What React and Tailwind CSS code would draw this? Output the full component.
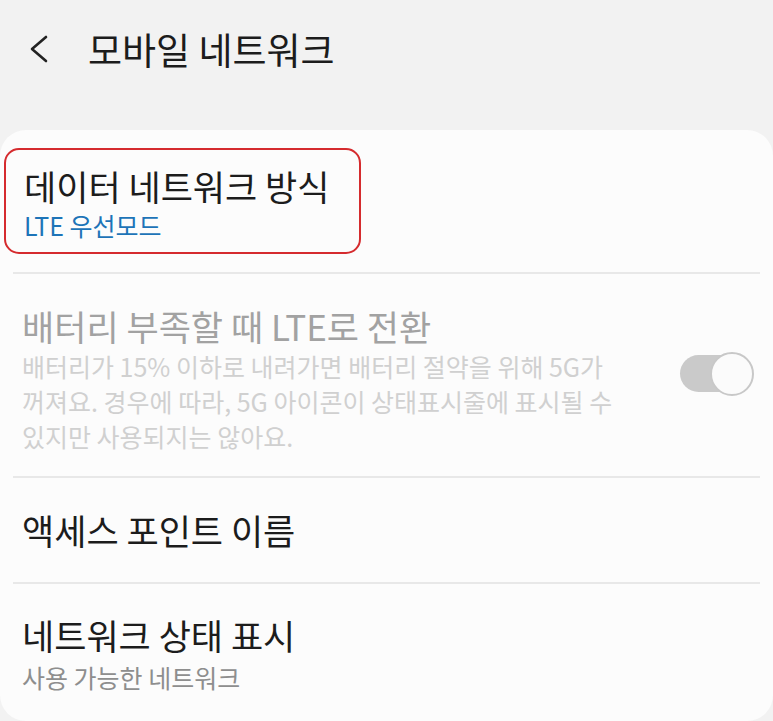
import React from 'react';

const font = { fontFamily: '"Noto Sans CJK KR", "Noto Sans", sans-serif' };

const Divider = () => <div className="mx-[13px] h-[2px] bg-[#e8e8e8]" />;

const Toggle = () => (
    <div className="relative w-[74px] h-[44px] shrink-0">
        <div className="absolute left-0 top-[3px] w-[66px] h-[37px] rounded-full bg-[#cacaca]" />
        <div className="absolute right-0 top-0 w-[44px] h-[44px] rounded-full bg-[#fbfbfb] border-2 border-[#c8c8c8]" />
    </div>
);

const App = () => {
    return (
        <div className="w-[773px] h-[721px] bg-[#f2f2f2] overflow-hidden flex flex-col" style={font}>
            {/* Header */}
            <header className="h-[130px] flex items-start pt-[28px]">
                <div className="w-[88px] h-[42px] flex items-center pl-[26px]">
                    <svg width="24" height="30" viewBox="0 0 24 30" fill="none">
                        <path d="M20 3 L6 15 L20 27" stroke="#222" strokeWidth="2.6" strokeLinecap="round" strokeLinejoin="round" />
                    </svg>
                </div>
                <h1 className="text-[37px] leading-[42px] text-[#1c1c1c]">모바일 네트워크</h1>
            </header>

            {/* Card */}
            <div className="flex-1 bg-[#fcfcfc] rounded-[26px] pt-[18px]">
                <div className="ml-[4px] w-[357px] h-[106px] border-2 border-[#d52b2e] rounded-[15px] pl-[18px] pt-[16px] flex flex-col">
                    <span className="text-[35px] leading-[40px] text-[#1c1c1c]">데이터 네트워크 방식</span>
                    <span className="mt-[4px] text-[25px] leading-[30px] text-[#1d74b8]">LTE 우선모드</span>
                </div>
                <div className="mt-[18px]" />
                <Divider />

                <div className="flex items-center pl-[22px] pr-[19px] pt-[32px] pb-[22px]">
                    <div className="flex-1 flex flex-col">
                        <span className="text-[35px] leading-[40px] text-[#a2a2a2]">배터리 부족할 때 LTE로 전환</span>
                        <p className="mt-[3px] text-[25px] leading-[35px] text-[#d0d0d0] whitespace-nowrap">
                            배터리가 15% 이하로 내려가면 배터리 절약을 위해 5G가<br />
                            꺼져요. 경우에 따라, 5G 아이콘이 상태표시줄에 표시될 수<br />
                            있지만 사용되지는 않아요.
                        </p>
                    </div>
                    <div className="mb-[12px]">
                        <Toggle />
                    </div>
                </div>
                <Divider />

                <div className="h-[104px] flex items-center pl-[22px]">
                    <span className="text-[35px] leading-[40px] text-[#1c1c1c]">액세스 포인트 이름</span>
                </div>
                <Divider />

                <div className="flex flex-col pl-[22px] pt-[31px]">
                    <span className="text-[35px] leading-[40px] text-[#1c1c1c]">네트워크 상태 표시</span>
                    <span className="mt-[7px] text-[25px] leading-[30px] text-[#8e8e8e]">사용 가능한 네트워크</span>
                </div>
            </div>
        </div>
    );
};

export default App;
